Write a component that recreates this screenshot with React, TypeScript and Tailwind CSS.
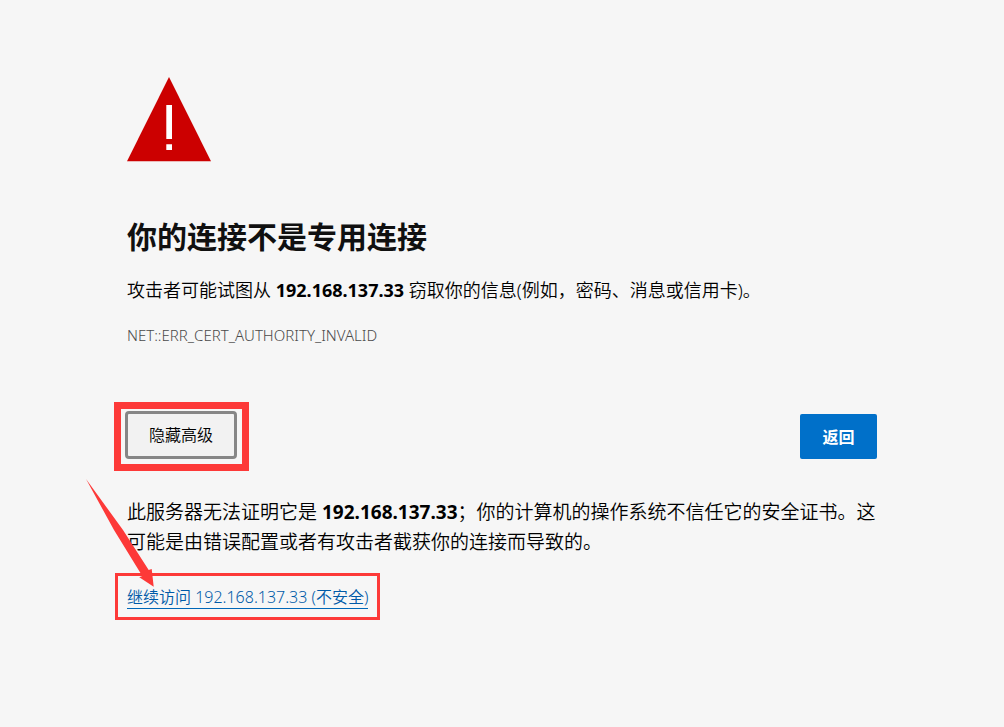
export default function App() {
  return (
    <main className="min-h-screen bg-[#f6f6f6] px-6 pt-[77px] pb-16 font-['Noto_Sans','Noto_Sans_CJK_SC',sans-serif] font-[350] text-black">
      <div className="mx-auto max-w-[750px]">
        <svg className="block h-[85px] w-[84px]" viewBox="0 0 84 85" role="img" aria-label="警告">
          <path d="M42 0L84 84.3H0Z" fill="#cc0000" />
          <path d="M39.3 28H45V62H39.3ZM39.3 67.3H45V73H39.3Z" fill="#fff" />
        </svg>
        <h1 className="mt-[53px] text-[30px] leading-[44px] font-bold text-[#101010]">你的连接不是专用连接</h1>
        <p className="mt-[15px] text-[18px] leading-8">
          攻击者可能试图从 <strong className="font-bold">192.168.137.33</strong> 窃取你的信息(例如，密码、消息或信用卡)。
        </p>
        <p className="mt-[17px] text-[15px] leading-6 text-[#4a4a4a]">NET::ERR_CERT_AUTHORITY_INVALID</p>

        <div className="mt-[55px] flex items-center justify-between">
          <div className="-ml-[13px] border-7 border-[#fd3938] pt-[2px] pr-[5px] pb-[5px] pl-1">
            <button type="button" className="block h-12 w-[112px] rounded-[4px] border-3 border-[#868686] bg-[#f2f2f2] text-[16px]">
              隐藏高级
            </button>
          </div>
          <button type="button" className="h-[45px] w-[77px] rounded-[2px] bg-[#0070c9] text-[16px] font-bold text-white">
            返回
          </button>
        </div>

        <p className="mt-[26px] text-[19px] leading-[30px]">
          此服务器无法证明它是 <strong className="font-bold">192.168.137.33</strong>；你的计算机的操作系统不信任它的安全证书。这可能是由错误配置或者有攻击者截获你的连接而导致的。
        </p>
        <div className="relative mt-4 -ml-3 w-fit border-3 border-[#fd3938] px-[9px] pt-[10px] pb-2">
          <a href="#proceed" className="block border-b border-[#0067b8] text-[16px] leading-[22px] text-[#005aa8]">
            继续访问 192.168.137.33 (不安全)
          </a>
          <svg className="pointer-events-none absolute -top-[97px] -left-8 h-[110px] w-[70px]" viewBox="0 0 70 110" aria-hidden="true">
            <path d="M0 0L37 51L62.7 91L65.7 90L67.7 107.7L53.3 98.3L56.3 97L28 51Z" fill="#fd3938" />
          </svg>
        </div>
      </div>
    </main>
  );
}
